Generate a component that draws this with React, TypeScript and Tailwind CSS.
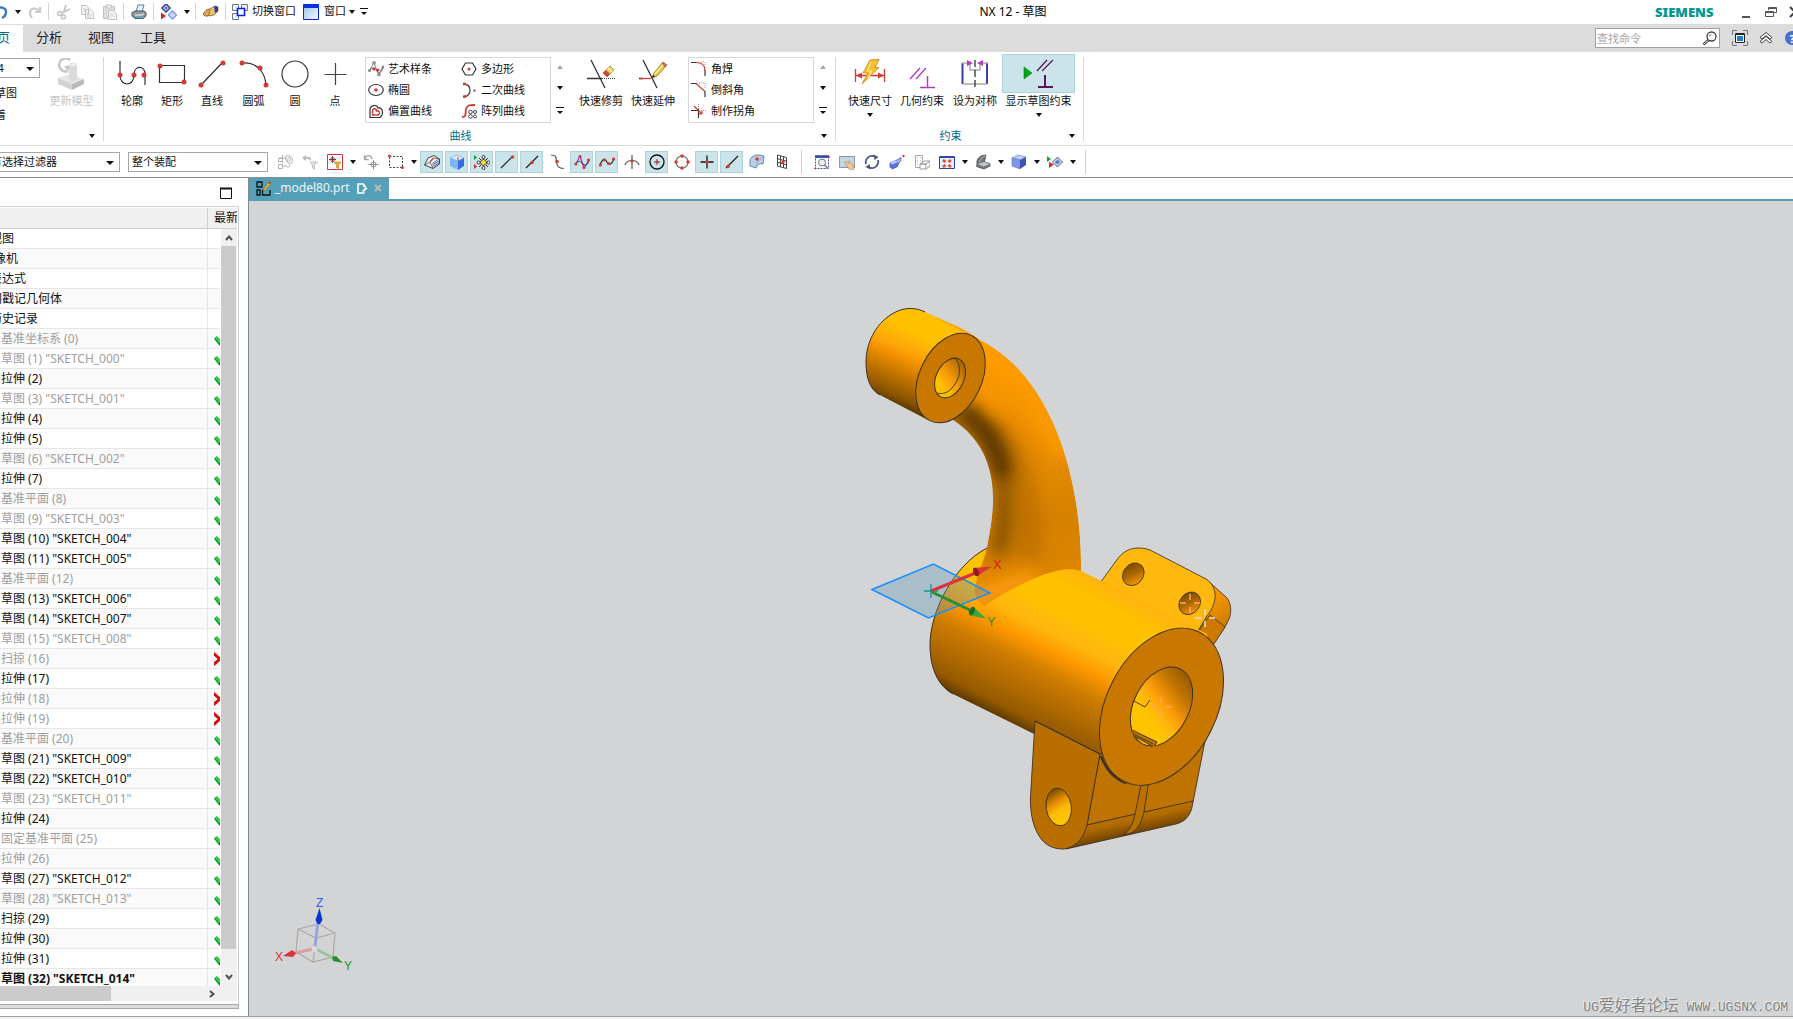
import type { ReactNode } from "react";
import clsx from "clsx";

type IconProps = { w?: number; h?: number; vb?: string; children: ReactNode };

function Icon({ w = 16, h = 16, vb, children }: IconProps) {
  return (
    <svg width={w} height={h} viewBox={vb ?? `0 0 ${w} ${h}`} fill="none" className="shrink-0" aria-hidden="true">
      {children}
    </svg>
  );
}

function Caret({ muted = false, up = false }: { muted?: boolean; up?: boolean }) {
  return (
    <Icon w={6} h={4}>
      <path d={up ? "M0 4h6L3 0z" : "M0 0h6L3 4z"} fill={muted ? "#a8a8a8" : "#111"} />
    </Icon>
  );
}

function MoreCaret() {
  return (
    <Icon w={8} h={8}>
      <path d="M0 .5h8" stroke="#111" />
      <path d="M1 4h6L4 7z" fill="#111" />
    </Icon>
  );
}

function Dot({ x, y, r = 2.5 }: { x: number; y: number; r?: number }) {
  return <circle cx={x} cy={y} r={r} fill="#d23c35" />;
}

/* ---------- Title bar ---------- */

function QuickDivider() {
  return <span className="h-[17px] w-px shrink-0 bg-[#d4d4d4]" />;
}

function QuickButton({ label, children }: { label: string; children: ReactNode }) {
  return (
    <button type="button" aria-label={label} className="flex h-5 w-[23px] shrink-0 items-center justify-center">
      {children}
    </button>
  );
}

function TitleBar() {
  return (
    <header className="flex h-6 items-center bg-white pb-px">
      <div className="-ml-[11px] flex w-[382px] shrink-0 items-center text-[11px]">
        <QuickButton label="撤销">
          <Icon>
            <path d="M2 2v5h5M3 6c3-4 10-3 10 2 0 3-2 5-4 6" stroke="#3a78c0" strokeWidth="2.4" />
          </Icon>
        </QuickButton>
        <span className="flex w-[11px] justify-center">
          <Caret />
        </span>
        <QuickButton label="重做">
          <Icon>
            <path d="M13 3v5H8M12 7C9 3 3 4 3 9c0 2 1 4 2 5" stroke="#c9c9c9" strokeWidth="2.2" />
          </Icon>
        </QuickButton>
        <span className="w-[2px]" />
        <QuickDivider />
        <span className="w-[3px]" />
        <QuickButton label="剪切">
          <Icon>
            <path d="M10 1 7.500 9M14 5 6 9" stroke="#c4c4c4" strokeWidth="1.8" />
            <circle cx="3.500" cy="9.500" r="2" stroke="#c4c4c4" strokeWidth="1.500" />
            <circle cx="7.500" cy="13" r="2" stroke="#c4c4c4" strokeWidth="1.500" />
          </Icon>
        </QuickButton>
        <QuickButton label="复制">
          <Icon>
            <path d="M2.500 1.500h5l2 2v7h-7zM6.500 5.500h5l3 3v6h-8z" fill="#f4f4f4" stroke="#c4c4c4" />
            <path d="M8 9h3M8 11h5M8 13h4M4 5h2M4 7h2" stroke="#cfcfcf" />
          </Icon>
        </QuickButton>
        <QuickButton label="粘贴">
          <Icon>
            <path d="M1.500 2.500h11v12h-11z" fill="#dedede" stroke="#c4c4c4" />
            <path d="M4.500 1h5v3h-5z" fill="#eee" stroke="#c4c4c4" />
            <path d="M6.500 6.500h5l3 3v6h-8z" fill="#f4f4f4" stroke="#c4c4c4" />
            <path d="M8 10h3M8 12h5" stroke="#cfcfcf" />
          </Icon>
        </QuickButton>
        <span className="w-[2px]" />
        <QuickDivider />
        <span className="w-[3px]" />
        <QuickButton label="打印">
          <Icon>
            <path d="m5 8 2-7h6l-2 7z" fill="#e6f2fa" stroke="#6c7d88" />
            <path d="M1 8.500 4 7h9l2 1.500V12l-3 2.500H4L1 12z" fill="#8e979c" stroke="#4e585e" />
            <path d="M4 11h7l2-1.500" stroke="#fff" />
            <path d="m5 13 6 .500" stroke="#55b0d0" strokeWidth="1.500" />
          </Icon>
        </QuickButton>
        <span className="w-[3px]" />
        <QuickDivider />
        <span className="w-[3px]" />
        <QuickButton label="命令查找">
          <Icon>
            <path d="m5 0 4 4-4 4-4-4z" fill="#fff" stroke="#2b3a8c" strokeWidth="1.500" />
            <path d="m5 2 2 2-2 2-2-2z" fill="#5a6ab8" />
            <path d="m11.500 7 4 4-4 4-4-4z" fill="#cfdcff" stroke="#7f9df0" strokeWidth="1.500" />
            <path d="M0 8.500v7l5-3.500z" fill="#d82020" />
          </Icon>
        </QuickButton>
        <span className="flex w-[14px] justify-center">
          <Caret />
        </span>
        <span className="w-px" />
        <QuickDivider />
        <span className="w-[3px]" />
        <QuickButton label="触控模式">
          <Icon w={17} h={14}>
            <path d="M1 9c2-3 4-5 7-5l2 2-4 5H3z" fill="#d9a860" stroke="#8c6226" />
            <path d="m8 4 5-3 3 1v4l-4 4-5 1z" fill="#e8c46a" stroke="#a27a2e" />
            <path d="m12 1 4 1v4l-3 2z" fill="#2d38b0" />
          </Icon>
        </QuickButton>
        <span className="w-[3px]" />
        <QuickDivider />
        <button type="button" className="flex shrink-0 items-center gap-1 pl-[6px] whitespace-nowrap">
          <Icon>
            <path d="M.500.500h6v6h-6zM9.500.500h6v6h-6zM.500 9.500h6v6h-6z" fill="#eef2f4" stroke="#6a7880" />
            <path d="M5.500 4.500h7v7h-7z" fill="#fff" stroke="#0a20f0" strokeWidth="1.600" />
          </Icon>
          切换窗口
        </button>
        <button type="button" className="flex shrink-0 items-center gap-[5px] pl-[7px] whitespace-nowrap">
          <Icon>
            <defs>
              <linearGradient id="win" x1="0" y1="0" x2="1" y2="1">
                <stop offset="0" stopColor="#8fc0ea" />
                <stop offset="1" stopColor="#fff" />
              </linearGradient>
            </defs>
            <path d="M.500.500h15v15h-15z" fill="url(#win)" stroke="#0a20f0" />
            <path d="M1 1h14v3H1z" fill="#1030d8" />
          </Icon>
          窗口
        </button>
        <span className="flex items-center gap-[5px] pl-[3px]">
          <Caret />
          <MoreCaret />
        </span>
      </div>
      <h1 className="flex-1 text-center text-[12px] leading-4 whitespace-nowrap text-black">NX 12 - 草图</h1>
      <div className="flex w-[138px] shrink-0 items-center overflow-hidden">
        <span className="w-[87px] shrink-0 font-['Noto_Sans','Open_Sans',sans-serif] text-[13px] leading-6 font-black text-[#009793]">
          SIEMENS
        </span>
        <button type="button" aria-label="最小化" className="flex w-[23px] shrink-0 items-center">
          <Icon w={8} h={12}>
            <path d="M0 11h8" stroke="#555" strokeWidth="2" />
          </Icon>
        </button>
        <button type="button" aria-label="还原" className="flex w-6 shrink-0 items-center">
          <Icon w={12} h={12}>
            <path d="M3.500 4V1.500h8v5H9M3.500 2.500h8M.500 5.500h8v5h-8zM.500 6.500h8" stroke="#555" />
          </Icon>
        </button>
        <button type="button" aria-label="关闭" className="shrink-0">
          <Icon w={12} h={12}>
            <path d="m1 1 10 10M11 1 1 11" stroke="#444" strokeWidth="2" />
          </Icon>
        </button>
      </div>
    </header>
  );
}

/* ---------- Ribbon tabs ---------- */

function TabBar() {
  return (
    <nav className="flex h-7 items-stretch overflow-hidden bg-[#dcdcdc] text-[13px] text-[#222]">
      <button type="button" className="-ml-[29px] mt-px bg-white px-[13px] pb-px text-[#006a8e]">
        主页
      </button>
      {["分析", "视图", "工具"].map((t) => (
        <button key={t} type="button" className="px-[13px]">
          {t}
        </button>
      ))}
      <div className="ml-auto flex w-[198px] shrink-0 items-center">
        <label className="flex h-5 w-[125px] shrink-0 items-center border border-[#a0a0a0] bg-white">
          <input
            type="text"
            aria-label="查找命令"
            placeholder="查找命令"
            className="h-[18px] w-[106px] bg-transparent pl-px text-[11px] outline-none placeholder:text-[#a6a6a6]"
          />
          <Icon w={15} h={15}>
            <circle cx="9.500" cy="5.500" r="4.500" stroke="#444" strokeWidth="1.300" />
            <path d="M7.500 5.500a2 2 0 0 1 2-2" stroke="#888" />
            <path d="m6.500 9-5 4.500" stroke="#444" strokeWidth="2.500" />
            <path d="m6 9.500-4 3.500" stroke="#fff" strokeWidth=".8" />
          </Icon>
        </label>
        <button type="button" aria-label="全屏" className="ml-3 shrink-0">
          <Icon>
            <path d="M.500 5V.500H5M11 .500h4.500V5M15.500 11v4.500H11M5 15.500H.500V11" stroke="#777" />
            <path d="M3.500 3.500h9v9h-9z" fill="#fff" stroke="#222" />
            <path d="M5 6h6v5H5z" fill="#1c7fd6" />
            <path d="M4 4.500h8" stroke="#222" />
          </Icon>
        </button>
        <button type="button" aria-label="最小化功能区" className="ml-[11px] shrink-0">
          <Icon w={14} h={12}>
            <path d="m1 5.500 6-5 6 5-2 1.500-4-3.500L3 7zM1 9.500l6-5 6 5-2 1.500-4-3.500L3 11z" fill="#fff" stroke="#333" strokeWidth=".9" />
          </Icon>
        </button>
        <button type="button" aria-label="帮助" className="ml-3 flex size-[14px] shrink-0 items-center justify-center rounded-full bg-[#4a6fd0] text-[11px] leading-none font-bold text-white">
          ?
        </button>
      </div>
    </nav>
  );
}

/* ---------- Ribbon ---------- */

type ToolProps = { label: string; width: string; icon: ReactNode; menu?: boolean; active?: boolean; disabled?: boolean };

function Tool({ label, width, icon, menu, active, disabled }: ToolProps) {
  return (
    <button type="button" disabled={disabled} className={clsx("flex shrink-0 flex-col items-center", width)}>
      <span
        className={clsx(
          "flex h-[39px] w-full items-center justify-center",
          active && "border border-[#aed3dc] bg-[#cbe4e9]",
        )}
      >
        {icon}
      </span>
      <span className={clsx("text-[11px] leading-4 whitespace-nowrap", disabled ? "text-[#c6c6c6]" : "text-[#111]")}>
        {label}
      </span>
      {menu && (
        <span className="flex h-3 items-center">
          <Caret />
        </span>
      )}
    </button>
  );
}

function RibbonGroup({ title, className, children }: { title?: string; className?: string; children: ReactNode }) {
  return (
    <section className="relative flex shrink-0 flex-col pr-px">
      <div className={clsx("flex h-[74px] items-start", className)}>{children}</div>
      <div className="flex h-4 items-center">
        <span className="flex-1 pl-1 text-center text-[11px] leading-4 text-[#006a8e]">{title}</span>
        <span className="flex w-[22px] justify-center">
          <Caret />
        </span>
      </div>
      <span className="absolute top-[3px] right-0 h-[84px] w-px bg-[#d8d8d8]" />
    </section>
  );
}

function GalleryScroll() {
  return (
    <div className="mt-[3px] flex h-[66px] w-[17px] shrink-0 flex-col items-center justify-around">
      <Caret up muted />
      <Caret />
      <MoreCaret />
    </div>
  );
}

function GalleryItem({ label, icon }: { label: string; icon: ReactNode }) {
  return (
    <button type="button" className="flex min-h-0 items-center gap-1 text-[11px] leading-4 whitespace-nowrap text-[#111]">
      <span className="flex w-4 justify-center">{icon}</span>
      {label}
    </button>
  );
}

const drawTools: (ToolProps & { label: string })[] = [
  {
    label: "轮廓",
    width: "w-[40px]",
    icon: (
      <Icon w={30} h={28}>
        <path d="M3 1v14c0 12 14 12 14 0 0-10 11-10 11-1v11" stroke="#333" strokeWidth="1.200" />
        <Dot x={3} y={15} />
        <Dot x={17} y={15} />
        <Dot x={27} y={15} />
      </Icon>
    ),
  },
  {
    label: "矩形",
    width: "w-[40px]",
    icon: (
      <Icon w={30} h={24}>
        <path d="M2.500 3.500h25v17h-25z" stroke="#333" strokeWidth="1.200" />
        <Dot x={3} y={4} />
        <Dot x={27} y={20} />
      </Icon>
    ),
  },
  {
    label: "直线",
    width: "w-[40px]",
    icon: (
      <Icon w={28} h={28}>
        <path d="M3 25 24 3" stroke="#333" strokeWidth="1.300" />
        <Dot x={3} y={25} />
        <Dot x={25} y={3} />
      </Icon>
    ),
  },
  {
    label: "圆弧",
    width: "w-[43px]",
    icon: (
      <Icon w={30} h={28}>
        <path d="M3 3c14-1 23 8 24 22" stroke="#333" strokeWidth="1.200" />
        <Dot x={3} y={3} />
        <Dot x={21} y={8} />
        <Dot x={27} y={25} />
      </Icon>
    ),
  },
  {
    label: "圆",
    width: "w-[40px]",
    icon: (
      <Icon w={28} h={28}>
        <circle cx="14" cy="14" r="13" stroke="#333" strokeWidth="1.200" />
      </Icon>
    ),
  },
  {
    label: "点",
    width: "w-[40px]",
    icon: (
      <Icon w={23} h={24}>
        <path d="M11.500 1v22M.500 12.500h22" stroke="#444" strokeWidth="1.200" />
      </Icon>
    ),
  },
];

const curveGallery = [
  {
    label: "艺术样条",
    icon: (
      <Icon>
        <path d="M1 10 6 2l3 8 2 3 4-7" stroke="#888" />
        <path d="M1 10c3-4 6-4 8 0s4 1 6-3" stroke="#555" />
        <circle cx="6" cy="2" r="2" fill="#999" />
        <circle cx="11" cy="13.500" r="2" fill="#999" />
        <Dot x={6} y={8} r={1.600} />
        <Dot x={10} y={9} r={1.600} />
        <circle cx="1.500" cy="9.500" r="1.500" fill="#888" />
        <circle cx="15" cy="6" r="1.500" fill="#888" />
      </Icon>
    ),
  },
  {
    label: "多边形",
    icon: (
      <Icon>
        <path d="M4.500 2h7l3.500 6-3.500 6h-7L1 8z" stroke="#333" strokeWidth="1.200" />
        <Dot x={8} y={8} r={1.600} />
      </Icon>
    ),
  },
  {
    label: "椭圆",
    icon: (
      <Icon>
        <ellipse cx="8" cy="8" rx="7.300" ry="5.500" stroke="#333" strokeWidth="1.200" />
        <Dot x={8} y={8} r={1.800} />
      </Icon>
    ),
  },
  {
    label: "二次曲线",
    icon: (
      <Icon>
        <path d="M3 2c8 1 8 11 0 13" stroke="#444" strokeWidth="1.300" />
        <path d="M2 2h3M2 15l3-1" stroke="#d23c35" strokeWidth="2.500" />
        <circle cx="13.500" cy="8.500" r="1.600" fill="#999" />
      </Icon>
    ),
  },
  {
    label: "偏置曲线",
    icon: (
      <Icon>
        <path d="M2 14.500V7c0-5 7-6 8-2 5-1 6 6 2 9.500z" stroke="#333" strokeWidth="1.200" />
        <path d="M4.500 12V8c0-3 4-3 4 0 3-1 4 2 2 4z" stroke="#d23c35" strokeWidth="1.400" />
      </Icon>
    ),
  },
  {
    label: "阵列曲线",
    icon: (
      <Icon>
        <path d="M1 14c5 0 3-4 4-8s3-4 9-4" stroke="#d23c35" strokeWidth="1.800" />
        <circle cx="9.500" cy="9" r="1.800" stroke="#444" />
        <circle cx="14" cy="9" r="1.500" stroke="#444" />
        <circle cx="9.500" cy="13.500" r="1.800" stroke="#444" />
        <circle cx="14" cy="13.500" r="1.500" stroke="#444" />
      </Icon>
    ),
  },
];

const cornerGallery = [
  {
    label: "角焊",
    icon: (
      <Icon>
        <path d="M10 1h4v4" stroke="#999" strokeDasharray="1 1" />
        <path d="M0 1.500h6M14 9v6" stroke="#333" strokeWidth="1.200" />
        <path d="M5 1.500c6 0 9 3 9 8" stroke="#d23c35" strokeWidth="1.200" />
      </Icon>
    ),
  },
  {
    label: "倒斜角",
    icon: (
      <Icon>
        <path d="M8 1h6v6" stroke="#999" strokeDasharray="1 1" />
        <path d="M0 1.500h6M14 9v6" stroke="#333" strokeWidth="1.200" />
        <path d="m5 1.500 9 8" stroke="#d23c35" strokeWidth="1.200" />
      </Icon>
    ),
  },
  {
    label: "制作拐角",
    icon: (
      <Icon>
        <path d="M7.500 1v5M10 7.500h5" stroke="#999" strokeDasharray="1 1" />
        <path d="M0 7.500h8M7.500 6v9" stroke="#333" strokeWidth="1.200" />
        <path d="m3 3 8 8M11 11H8M11 11V8" stroke="#d23c35" strokeWidth="1.200" />
      </Icon>
    ),
  },
];

const trimIcon = (
  <Icon w={30} h={30}>
    <path d="M5 1 19 29M1 19.500h15" stroke="#333" strokeWidth="1.300" />
    <path d="M16 19.500h14" stroke="#333" strokeDasharray="1 1" />
    <path d="m17 14 7-7 4 4-7 7z" fill="#f5d24a" stroke="#a8812a" strokeWidth=".8" />
    <path d="m17 14 3-3 4 4-3 3z" fill="#c8473e" />
    <path d="m22 9 4 4" stroke="#fff6c0" strokeWidth="1.500" />
  </Icon>
);

const extendIcon = (
  <Icon w={30} h={30}>
    <path d="M5 1 19 29M1 19.500h4" stroke="#333" strokeWidth="1.300" />
    <path d="M2 19.500h11" stroke="#d23c35" strokeWidth="1.300" />
    <path d="m14 19 2-5L25 3l4 3-10 11z" fill="#f2cc3c" stroke="#8a6a1a" strokeWidth=".8" />
    <path d="m25 3 4 3-2 2.500-4-3.200z" fill="#c8675e" />
    <path d="m14 19 1-3 2 1.500z" fill="#222" />
    <path d="M17 15 25 5.500" stroke="#fff4b0" strokeWidth="1.200" />
  </Icon>
);

const dimensionIcon = (
  <Icon w={32} h={30}>
    <path d="M1.500 10v13M30.500 10v13M2 16.500h28" stroke="#d23c35" strokeWidth="1.300" />
    <path d="m2 16.500 6-3v6zM30 16.500l-6-3v6z" fill="#d23c35" />
    <path d="m16 1 9-.500-4 8h4L8 25l6-11h-5z" fill="#f8c030" stroke="#d8861c" strokeWidth=".9" />
    <path d="m17 3-4 9h5l-4 7" stroke="#fff0a0" />
  </Icon>
);

const geometricIcon = (
  <Icon w={28} h={30}>
    <path d="M2 20 12 9M8 20 18 9" stroke="#b33cc0" strokeWidth="1.300" />
    <path d="M19.500 17v11M12 28.500h15" stroke="#b33cc0" strokeWidth="1.500" />
  </Icon>
);

const symmetricIcon = (
  <Icon w={28} h={30}>
    <path d="M1.500 4v21M26 4v21" stroke="#3a3fa0" strokeWidth="2" />
    <path d="M2 25h24M1 4h6M21 4h6M9 5v6h10V5" stroke="#aaa" strokeWidth="1.500" />
    <path d="m6 1 6 3-6 3zM22 1l-6 3 6 3z" fill="#b33cc0" />
    <path d="M14 1v29" stroke="#222" strokeWidth="1.200" strokeDasharray="7 3" />
  </Icon>
);

const showIcon = (
  <Icon w={32} h={32}>
    <path d="M1 9v12l8-6z" fill="#00a818" stroke="#0a7a1c" strokeWidth=".6" />
    <path d="m14 13 10-11M19 13 30 2" stroke="#5c1460" strokeWidth="1.300" />
    <path d="M22 17v11M15 29h15" stroke="#5c1460" strokeWidth="2" />
  </Icon>
);

function Select({ label, value, className }: { label: string; value: string; className: string }) {
  return (
    <label className={clsx("relative block h-5 shrink-0 bg-white", className)}>
      <select
        aria-label={label}
        className="block h-5 w-full appearance-none rounded-none border border-[#a6a6a6] bg-transparent pl-[3px] text-[11px] leading-[18px] text-[#111] outline-none"
      >
        <option>{value}</option>
      </select>
      <span className="pointer-events-none absolute top-[9px] right-[6px]">
        <Icon w={8} h={4}>
          <path d="M0 0h8L4 4z" fill="#111" />
        </Icon>
      </span>
    </label>
  );
}

function Ribbon() {
  return (
    <div className="flex h-[94px] overflow-hidden border-b border-[#d8d8d8] bg-white pt-[2px]">
      <RibbonGroup className="-ml-16 w-[167px]">
        <div className="mt-1 w-[104px] shrink-0">
          <Select label="草图名" value="SKETCH_014" className="w-[104px]" />
          <div className="mt-1 flex flex-col items-start pl-[26px] text-[11px] leading-[22px] text-[#111]">
            <button type="button">定向到草图</button>
            <button type="button">重新附着</button>
          </div>
        </div>
        <Tool
          label="更新模型"
          width="w-[63px]"
          disabled
          icon={
            <Icon w={32} h={32}>
              <path d="M14 2a6.500 6.500 0 1 0-2 11" stroke="#c4c4c4" strokeWidth="2.500" />
              <path d="M8 8.500 15 7l-3 6z" fill="#c4c4c4" />
              <path d="M2 20 15 16l13 5-12 5z" fill="#e6e6e6" />
              <path d="m2 20 14 6v6L2 26z" fill="#d2d2d2" />
              <path d="m28 21-12 5v6l12-6z" fill="#bababa" />
              <path d="M13 7h8v14c-2 2-6 2-8 0z" fill="#dadada" />
              <ellipse cx="17" cy="7" rx="4" ry="1.800" fill="#efefef" stroke="#cfcfcf" strokeWidth=".5" />
            </Icon>
          }
        />
      </RibbonGroup>

      <RibbonGroup title="曲线" className="pr-1 pl-2">
        {drawTools.map((t) => (
          <Tool key={t.label} {...t} />
        ))}
        <div className="mt-[3px] ml-[10px] grid h-[66px] w-[186px] shrink-0 grid-cols-[93px_1fr] grid-rows-3 border border-[#d8d8d8] pl-[2px]">
          {curveGallery.map((g) => (
            <GalleryItem key={g.label} {...g} />
          ))}
        </div>
        <GalleryScroll />
        <div className="mr-[9px] ml-[7px] flex">
          <Tool label="快速修剪" width="w-[52px]" icon={trimIcon} />
          <Tool label="快速延伸" width="w-[52px]" icon={extendIcon} />
        </div>
        <div className="mt-[3px] grid h-[66px] w-[126px] shrink-0 grid-rows-3 border border-[#d8d8d8] pl-[2px]">
          {cornerGallery.map((g) => (
            <GalleryItem key={g.label} {...g} />
          ))}
        </div>
        <GalleryScroll />
      </RibbonGroup>

      <RibbonGroup title="约束" className="px-2">
        <Tool label="快速尺寸" width="w-[52px]" icon={dimensionIcon} menu />
        <Tool label="几何约束" width="w-[52px]" icon={geometricIcon} />
        <Tool label="设为对称" width="w-[54px]" icon={symmetricIcon} />
        <Tool label="显示草图约束" width="w-[73px]" icon={showIcon} menu active />
      </RibbonGroup>
    </div>
  );
}

/* ---------- Selection bar ---------- */

type BarItem = { label: string; on?: boolean; icon: ReactNode } | "caret" | "divider";

const barItems: BarItem[] = [
  {
    label: "装配导航",
    icon: (
      <Icon>
        <path d="M1.500 4.500h4v3h-4zM1.500 10.500h4v4h-4zM6 12h3M5.500 1v8M2 4h8" stroke="#b0b0b0" />
        <ellipse cx="11" cy="4.500" rx="2.500" ry="3.500" stroke="#b8b8b8" />
        <ellipse cx="13" cy="6.500" rx="2.500" ry="3.500" stroke="#b8b8b8" />
        <path d="M9 11c0 3 4 3 4 0" stroke="#b8b8b8" />
      </Icon>
    ),
  },
  {
    label: "重置过滤器",
    icon: (
      <Icon>
        <path d="M0 4l4-3v2c5-1 6 2 4 4 0-2-2-2-4-2v2z" fill="#bbb" />
        <path d="M8 8h7.500l-3 3v4.500l-2-1.500V11z" fill="#e4e4e4" stroke="#c0c0c0" />
      </Icon>
    ),
  },
  {
    label: "选择优先级",
    icon: (
      <Icon>
        <path d="M.500.500h15v15H.500z" fill="#fff" stroke="#d8343e" />
        <path d="M5.500 2v7M2 5.500h7" stroke="#444" />
        <circle cx="5.500" cy="5.500" r="2" stroke="#c04040" />
        <path d="M7 8h7l-2.500 3v3.500l-2-1V11z" fill="#f0b030" stroke="#b07a10" strokeWidth=".6" />
      </Icon>
    ),
  },
  "caret",
  {
    label: "移动点",
    icon: (
      <Icon>
        <path d="M2 5c1-4 6-5 7 0M1.500 1v4.500h4" stroke="#a8a8a8" strokeWidth="1.400" />
        <path d="M10.500 6v9.500M5.500 10.500h10" stroke="#909090" />
        <circle cx="10.500" cy="10.500" r="2.500" stroke="#909090" />
      </Icon>
    ),
  },
  {
    label: "矩形选择",
    icon: (
      <Icon>
        <path d="M1.500 2.500h13v11h-13z" stroke="#444" strokeDasharray="2 1.500" />
        <Dot x={1.500} y={2} r={1.500} />
        <Dot x={14.500} y={13.500} r={1.500} />
      </Icon>
    ),
  },
  "caret",
  {
    label: "高亮显示",
    on: true,
    icon: (
      <Icon>
        <path d="M.500 11 4 4l6-2.500L15.500 5v5L9 14.500z" fill="#eef1f5" stroke="#444" />
        <path d="M.500 11 6 8l3.500-4 6 1M6 8l3 6.500M9 14.500V9l6-4" stroke="#666" strokeWidth=".9" />
        <path d="M6.500 7.500 9.500 4" stroke="#d23c35" strokeWidth="1.200" />
        <path d="m10 10 5-3M10 12l5-3" stroke="#3d57c8" />
      </Icon>
    ),
  },
  {
    label: "实体",
    on: true,
    icon: (
      <Icon>
        <path d="m1 4 7-3 7 3-6 3z" fill="#dceaff" stroke="#7e9fd8" strokeWidth=".6" />
        <path d="m1 4 8 3v9l-8-4z" fill="#7fb4f8" />
        <path d="m15 4-6 3v9l6-4z" fill="#2f6fe0" />
        <path d="M9 7V3" stroke="#d23c35" />
      </Icon>
    ),
  },
  {
    label: "启用捕捉点",
    on: true,
    icon: (
      <Icon>
        <path d="M0 1v5l3-2.500z" fill="#13a020" />
        <path d="M0 10v5l3-2.500z" fill="#d82020" />
        <path d="M9.500 2v13M3.500 8.500h12M5 4l9 9M14 4l-9 9" stroke="#333" />
        <circle cx="9.500" cy="8.500" r="3" fill="#f6d428" stroke="#555" />
        <circle cx="9.500" cy="3" r="1.500" fill="#fff" stroke="#333" />
        <circle cx="9.500" cy="14" r="1.500" fill="#fff" stroke="#333" />
        <circle cx="4.500" cy="8.500" r="1.500" fill="#fff" stroke="#333" />
        <circle cx="14.500" cy="8.500" r="1.500" fill="#fff" stroke="#333" />
      </Icon>
    ),
  },
  {
    label: "端点",
    on: true,
    icon: (
      <Icon>
        <path d="M2 14 13 3" stroke="#222" strokeWidth="1.200" />
        <Dot x={13.500} y={3} r={1.800} />
      </Icon>
    ),
  },
  {
    label: "中点",
    on: true,
    icon: (
      <Icon>
        <path d="M2 14 14 2" stroke="#222" strokeWidth="1.200" />
        <Dot x={8} y={8.500} r={1.800} />
      </Icon>
    ),
  },
  {
    label: "控制点",
    icon: (
      <Icon>
        <path d="M2 1c6 0 5 3 5.500 7S9 14 15 14.500" stroke="#555" strokeWidth="1.200" />
        <Dot x={8} y={7.500} r={1.800} />
      </Icon>
    ),
  },
  {
    label: "极点",
    on: true,
    icon: (
      <Icon>
        <path d="M2 10 6 2l4 12 5-8" stroke="#a030d0" strokeWidth="1.200" />
        <path d="M1 10c4-4 5-3 8 0s5 0 6-4" stroke="#333" />
        <Dot x={1.800} y={10} r={1.600} />
        <Dot x={6} y={2.500} r={1.600} />
        <Dot x={10} y={13.500} r={1.600} />
        <Dot x={14.500} y={6} r={1.600} />
      </Icon>
    ),
  },
  {
    label: "定义点",
    on: true,
    icon: (
      <Icon>
        <path d="M1 11c3-7 5-7 7-3s5 2 7-3" stroke="#333" strokeWidth="1.200" />
        <Dot x={1.500} y={11} r={1.600} />
        <Dot x={5.500} y={6} r={1.600} />
        <Dot x={9.500} y={9.500} r={1.600} />
        <Dot x={14.500} y={5} r={1.600} />
      </Icon>
    ),
  },
  {
    label: "交点",
    icon: (
      <Icon>
        <path d="M8 1v14M1 11c2-6 12-6 14 0" stroke="#555" strokeWidth="1.200" />
        <Dot x={8} y={6.800} r={1.600} />
      </Icon>
    ),
  },
  {
    label: "圆弧中心",
    on: true,
    icon: (
      <Icon>
        <circle cx="8" cy="8" r="7" stroke="#111" strokeWidth="1.300" />
        <path d="M5 8h6M8 5v6" stroke="#555" />
        <Dot x={8} y={8} r={1.600} />
      </Icon>
    ),
  },
  {
    label: "象限点",
    icon: (
      <Icon>
        <circle cx="8" cy="8" r="6" stroke="#777" strokeWidth="1.200" />
        <Dot x={8} y={2} r={1.800} />
        <Dot x={8} y={14} r={1.800} />
        <Dot x={2} y={8} r={1.800} />
        <Dot x={14} y={8} r={1.800} />
      </Icon>
    ),
  },
  {
    label: "现有点",
    on: true,
    icon: (
      <Icon>
        <path d="M8 1.500v13M1.500 8h13" stroke="#111" strokeWidth="1.300" />
        <Dot x={8} y={8} r={1.800} />
      </Icon>
    ),
  },
  {
    label: "点在曲线上",
    on: true,
    icon: (
      <Icon>
        <path d="M2 14 14 2" stroke="#222" strokeWidth="1.200" />
        <Dot x={4} y={12.500} r={1.800} />
      </Icon>
    ),
  },
  {
    label: "点在面上",
    icon: (
      <Icon>
        <path d="M1 6C3 1 8 0 15 2l-1 8c-3-1-5 0-7 4L1 12z" fill="#b9cfe6" stroke="#6c87a8" />
        <path d="m7 14 2-7 6-5" stroke="#8ea6c2" />
        <Dot x={8} y={5} r={1.800} />
      </Icon>
    ),
  },
  {
    label: "有界栅格上的点",
    icon: (
      <Icon>
        <path d="m3.500 1 9 2.500v11L3.500 12zM3.500 4.700l9 2.500M3.500 8.300l9 2.500M6.500 2v11M9.500 2.800v11" stroke="#444" />
        <Dot x={9} y={8} r={1.700} />
      </Icon>
    ),
  },
  "divider",
  {
    label: "适合窗口",
    icon: (
      <Icon>
        <path d="M1.500 3.500h13v11h-13z" stroke="#3d57c8" strokeDasharray="2 1" />
        <path d="M1 2.500h14" stroke="#2f44b0" strokeWidth="2.500" />
        <circle cx="8" cy="8.500" r="3.500" fill="#e8eef4" stroke="#777" />
        <path d="m10.500 11 3 3" stroke="#777" strokeWidth="1.500" />
        <Dot x={15} y={3} r={1} />
        <Dot x={1} y={14.500} r={1} />
      </Icon>
    ),
  },
  {
    label: "平移",
    icon: (
      <Icon>
        <path d="M.500 2.500h15v11H.500z" fill="#c6d4e6" stroke="#8b97a6" />
        <path d="m5.500 8 2-.500 2 2V7.500l1.500-.500 1 3 2 .500 1 5-4 1z" fill="#f0c898" stroke="#b08850" strokeWidth=".6" />
      </Icon>
    ),
  },
  {
    label: "旋转",
    icon: (
      <Icon>
        <path d="M2 10a6.300 6.300 0 0 1 9-7.300M14 6a6.300 6.300 0 0 1-9 7.300" stroke="#4a5680" strokeWidth="1.800" />
        <path d="m9.500.500 5 2.500-4 3zM6.500 15.500l-5-2.500 4-3z" fill="#4a5680" />
      </Icon>
    ),
  },
  {
    label: "定向视图",
    icon: (
      <Icon>
        <path d="m1 9 6-2.500 2.500 3-1 3L3.500 15 1 13z" fill="#5a70dc" stroke="#3a4cb0" strokeWidth=".7" />
        <path d="m7 6.500 5-3v3l-2.500 3z" fill="#a9b6f4" stroke="#3a4cb0" strokeWidth=".7" />
        <path d="m1 9 6-2.500 2 1.500-6 2.500z" fill="#c2ccf8" />
        <Dot x={14.500} y={2} r={1.200} />
      </Icon>
    ),
  },
  {
    label: "新建截面",
    icon: (
      <Icon>
        <path d="M1.500 1.500h7v12h-7zM3 4h1M6 4h1M3 7h1M6 7h1M3 10h1" stroke="#a8a8a8" />
        <path d="m6 10 4-3h6l-4 3zM6 10h6v5H6zM16 7v5l-4 3" fill="#fff" stroke="#999" />
      </Icon>
    ),
  },
  {
    label: "显示布局",
    icon: (
      <Icon>
        <path d="M.500 2.500h15v12H.500z" fill="#e8eefc" stroke="#2f44b0" />
        <path d="M1 3h14" stroke="#2f44b0" strokeWidth="2" />
        <path d="m4 6 2.500 2M12 6l-2.500 2M4 13l2.500-2M12 13l-2.500-2" stroke="#e04a28" strokeWidth="2.500" />
      </Icon>
    ),
  },
  "caret",
  {
    label: "显示样式",
    icon: (
      <Icon>
        <path d="M2 10c-1-5 3-9 9-9L9.500 8l5.500 1.500V12l-6 3-7.500-2.500z" fill="#74787b" stroke="#4c5054" strokeWidth=".8" />
        <path d="M9.500 8 3 10l5.500 2.500L15 10" fill="#c4c7c9" />
        <path d="M10.500 2C7 3 5.500 5 4.500 8.500" stroke="#b0b3b5" />
      </Icon>
    ),
  },
  "caret",
  {
    label: "着色",
    icon: (
      <Icon>
        <path d="m1 4 6-3 8 2-6 3z" fill="#c2cff8" stroke="#5d74cc" strokeWidth=".6" />
        <path d="m1 4 8 2v9l-8-3z" fill="#8096e8" stroke="#5d74cc" strokeWidth=".6" />
        <path d="m15 3-6 3v9l6-4z" fill="#4156b4" />
      </Icon>
    ),
  },
  "caret",
  {
    label: "显示和隐藏",
    icon: (
      <Icon>
        <path d="M0 2v6l4-3z" fill="#18a428" />
        <path d="M2 8v6l5-3.500z" fill="#d23030" />
        <path d="m10.500 3 5 5-5 5-5-5z" fill="#c9d2e8" stroke="#5c6684" />
        <path d="m10.500 5.500 2.500 2.500-2.500 2.500L8 8z" fill="#5f78c8" />
      </Icon>
    ),
  },
  "caret",
  "divider",
];

function SelectionBar() {
  return (
    <div className="flex h-8 items-center overflow-hidden border-b border-[#868c90] bg-white">
      <Select label="类型过滤器" value="没有选择过滤器" className="-ml-[24px] w-[144px]" />
      <Select label="选择范围" value="整个装配" className="ml-2 w-[140px]" />
      <div className="ml-[5px] flex items-center gap-[2px]">
        {barItems.map((it, i) => {
          if (it === "caret") {
            return (
              <span key={i} className="flex w-[9px] justify-center">
                <Caret />
              </span>
            );
          }
          if (it === "divider") return <span key={i} className="mx-[6px] h-6 w-px bg-[#d0d0d0]" />;
          return (
            <button
              key={i}
              type="button"
              aria-label={it.label}
              className={clsx(
                "flex h-[22px] w-[23px] shrink-0 items-center justify-center",
                it.on && "border border-[#aed3dc] bg-[#cbe4e9]",
              )}
            >
              {it.icon}
            </button>
          );
        })}
      </div>
    </div>
  );
}

/* ---------- Part navigator ---------- */

type TreeRow = { name: string; status?: "ok" | "bad"; dim?: boolean; bold?: boolean; check?: boolean };

const rows: TreeRow[] = [
  { name: "模型视图" },
  { name: "摄像机", check: true },
  { name: "用户表达式" },
  { name: "非时间戳记几何体" },
  { name: "模型历史记录" },
  { name: "基准坐标系 (0)", status: "ok", dim: true },
  { name: '草图 (1) "SKETCH_000"', status: "ok", dim: true },
  { name: "拉伸 (2)", status: "ok" },
  { name: '草图 (3) "SKETCH_001"', status: "ok", dim: true },
  { name: "拉伸 (4)", status: "ok" },
  { name: "拉伸 (5)", status: "ok" },
  { name: '草图 (6) "SKETCH_002"', status: "ok", dim: true },
  { name: "拉伸 (7)", status: "ok" },
  { name: "基准平面 (8)", status: "ok", dim: true },
  { name: '草图 (9) "SKETCH_003"', status: "ok", dim: true },
  { name: '草图 (10) "SKETCH_004"', status: "ok" },
  { name: '草图 (11) "SKETCH_005"', status: "ok" },
  { name: "基准平面 (12)", status: "ok", dim: true },
  { name: '草图 (13) "SKETCH_006"', status: "ok" },
  { name: '草图 (14) "SKETCH_007"', status: "ok" },
  { name: '草图 (15) "SKETCH_008"', status: "ok", dim: true },
  { name: "扫掠 (16)", status: "bad", dim: true },
  { name: "拉伸 (17)", status: "ok" },
  { name: "拉伸 (18)", status: "bad", dim: true },
  { name: "拉伸 (19)", status: "bad", dim: true },
  { name: "基准平面 (20)", status: "ok", dim: true },
  { name: '草图 (21) "SKETCH_009"', status: "ok" },
  { name: '草图 (22) "SKETCH_010"', status: "ok" },
  { name: '草图 (23) "SKETCH_011"', status: "ok", dim: true },
  { name: "拉伸 (24)", status: "ok" },
  { name: "固定基准平面 (25)", status: "ok", dim: true },
  { name: "拉伸 (26)", status: "ok", dim: true },
  { name: '草图 (27) "SKETCH_012"', status: "ok" },
  { name: '草图 (28) "SKETCH_013"', status: "ok", dim: true },
  { name: "扫掠 (29)", status: "ok" },
  { name: "拉伸 (30)", status: "ok" },
  { name: "拉伸 (31)", status: "ok" },
  { name: '草图 (32) "SKETCH_014"', status: "ok", bold: true },
];

function StatusMark({ status }: { status: "ok" | "bad" }) {
  return status === "ok" ? (
    <Icon w={14} h={14}>
      <path d="m1.500 5.500 4 5 6-8" stroke="#0a8a24" strokeWidth="4" />
      <path d="m1.500 5 3.500 4.500 6-8" stroke="#1fdc3c" strokeWidth="2.200" />
    </Icon>
  ) : (
    <Icon w={14} h={14}>
      <path d="m-1 1 7 6-7 6M13 1 6 7l7 6" stroke="#d40f0f" strokeWidth="3" />
    </Icon>
  );
}

function Navigator() {
  return (
    <aside className="flex w-[249px] shrink-0 flex-col border-r border-[#7f898f] bg-white">
      <div className="flex h-7 items-center justify-end pt-[2px] pr-4">
        <button type="button" aria-label="最大化">
          <Icon w={12} h={12}>
            <path d="M.500 1v10.500h11V1" stroke="#111" />
            <path d="M0 1.500h12" stroke="#111" strokeWidth="2" />
          </Icon>
        </button>
      </div>
      <div className="mr-[9px] flex min-h-0 flex-1 flex-col overflow-hidden border-t border-r border-[#d0d0d0] pt-px pr-px">
        <div className="relative min-h-0 flex-1 overflow-hidden">
          <table className="-ml-[34px] w-[271px] table-fixed border-separate border-spacing-0 text-[12px] leading-4">
            <thead>
              <tr>
                <th scope="col" aria-label="名称" className="h-[21px] w-[242px] border-r border-b border-[#cfcfcf] bg-[#f0f0f0] p-0" />
                <th scope="col" className="h-[21px] overflow-hidden border-b border-[#cfcfcf] bg-[#f0f0f0] p-0 pl-[6px] text-left font-normal whitespace-nowrap">
                  最新
                </th>
              </tr>
            </thead>
            <tbody>
              {rows.map((r) => (
                <tr key={r.name} className={clsx("odd:bg-white even:bg-[#fafafa]", r.dim ? "text-[#9e9e9e]" : "text-[#111]")}>
                  <td
                    className={clsx(
                      "h-5 border-r border-b border-[#e6e6e6] p-0 whitespace-nowrap",
                      r.status && "pl-[35px]",
                      r.check && "pl-4",
                      r.bold && "font-bold",
                    )}
                  >
                    {r.name}
                  </td>
                  <td className="h-5 overflow-hidden border-b border-[#e6e6e6] p-0 pl-[6px]">
                    {r.status && <StatusMark status={r.status} />}
                  </td>
                </tr>
              ))}
            </tbody>
          </table>
          <div className="absolute top-[21px] right-0 bottom-0 flex w-[17px] flex-col border-l border-white bg-[#f0f0f0]">
            <span className="flex h-[17px] items-center justify-center">
              <Icon w={8} h={6}>
                <path d="m1 5 3-3.500L7 5" stroke="#505050" strokeWidth="2" />
              </Icon>
            </span>
            <span className="mr-px flex-1 bg-[#cbcbcb]" />
            <span className="flex h-[37px] items-end justify-center pb-[6px]">
              <Icon w={8} h={6}>
                <path d="M1 1 4 4.500 7 1" stroke="#505050" strokeWidth="2" />
              </Icon>
            </span>
          </div>
        </div>
        <div className="flex h-[15px] shrink-0 items-center bg-[#f0f0f0]">
          <span className="h-full w-[111px] bg-[#cbcbcb]" />
          <span className="ml-auto pr-[22px]">
            <Icon w={6} h={8}>
              <path d="m1 1 3.500 3L1 7" stroke="#505050" strokeWidth="2" />
            </Icon>
          </span>
        </div>
        <div className="h-[2px] shrink-0" />
      </div>
      <div className="mt-px mr-[9px] mb-[7px] h-[5px] shrink-0 border-y border-r border-[#a8a8a8] bg-[#dcdcdc]" />
    </aside>
  );
}

/* ---------- Graphics window ---------- */

const ARM =
  "M925 312 L950 323 C962 328 972 334 980 340 C1000 350 1018 366 1032 386 C1060 425 1082 490 1081 572 L1081 600 L985 606 C978 602 975 598 975 590 C976 575 984 562 987 547 C990 532 993 515 993 500 C993 472 986 440 950 418 Z";
const ARM_OVERLAP = "M1081 571 C1060 563 1020 583 987 604 L975 615 L1010 640 L1130 640 L1140 600 Z";
const BODY =
  "M1207 634 L1081 571 L1012 541 C1006 541 996 542 987 548 C953 566 930 612 930 645 C930 668 938 686 953 694 L1034 734 L1100 756 L1160 780 L1215 700 Z";

function PartModel() {
  return (
    <svg viewBox="249 201 1544 815" className="h-full w-full" role="img" aria-label="零件模型">
      <defs>
        <linearGradient id="body" gradientUnits="userSpaceOnUse" x1="1138" y1="600" x2="1062" y2="749">
          <stop offset="0" stopColor="#ffb40e" />
          <stop offset=".12" stopColor="#ffc000" />
          <stop offset=".26" stopColor="#ffc200" />
          <stop offset=".4" stopColor="#ffb60e" />
          <stop offset=".52" stopColor="#fc9700" />
          <stop offset=".64" stopColor="#cf7d00" />
          <stop offset=".8" stopColor="#b06a00" />
          <stop offset=".93" stopColor="#945900" />
          <stop offset="1" stopColor="#5e3a00" />
        </linearGradient>
        <linearGradient id="boss" gradientUnits="userSpaceOnUse" x1="936" y1="314" x2="896" y2="404">
          <stop offset="0" stopColor="#ffc000" />
          <stop offset=".25" stopColor="#ffc200" />
          <stop offset=".45" stopColor="#ffa60a" />
          <stop offset=".55" stopColor="#f29100" />
          <stop offset=".75" stopColor="#ba7000" />
          <stop offset=".92" stopColor="#8a5300" />
          <stop offset="1" stopColor="#5e3a00" />
        </linearGradient>
        <linearGradient id="arm" gradientUnits="userSpaceOnUse" x1="1000" y1="340" x2="1030" y2="600">
          <stop offset="0" stopColor="#ff9c00" />
          <stop offset=".35" stopColor="#ee9000" />
          <stop offset=".7" stopColor="#d68100" />
          <stop offset="1" stopColor="#e08600" />
        </linearGradient>
        <linearGradient id="bore" gradientUnits="userSpaceOnUse" x1="1184" y1="668" x2="1148" y2="744">
          <stop offset="0" stopColor="#8a5300" />
          <stop offset=".28" stopColor="#c67800" />
          <stop offset=".48" stopColor="#ff9c08" />
          <stop offset=".62" stopColor="#ffb80c" />
          <stop offset=".75" stopColor="#ffc400" />
        </linearGradient>
        <linearGradient id="smallBore" x1=".7" y1="0" x2=".35" y2="1">
          <stop offset="0" stopColor="#9c5d00" />
          <stop offset=".5" stopColor="#f89a08" />
          <stop offset=".8" stopColor="#ffc200" />
        </linearGradient>
        <linearGradient id="lugBore" x1=".3" y1="0" x2=".6" y2="1">
          <stop offset="0" stopColor="#6c4100" />
          <stop offset=".35" stopColor="#e08800" />
          <stop offset=".6" stopColor="#ffbc08" />
          <stop offset="1" stopColor="#ffc800" />
        </linearGradient>
        <linearGradient id="boltHole" x1="0" y1="0" x2="1" y2=".6">
          <stop offset="0" stopColor="#6c4100" />
          <stop offset=".55" stopColor="#a86500" />
          <stop offset="1" stopColor="#f09408" />
        </linearGradient>
        <linearGradient id="lugSide" gradientUnits="userSpaceOnUse" x1="1135" y1="812" x2="1141" y2="839">
          <stop offset="0" stopColor="#bf7300" />
          <stop offset=".3" stopColor="#ae6900" />
          <stop offset="1" stopColor="#4e3000" />
        </linearGradient>
        <linearGradient id="earSide" x1="0" y1="0" x2=".4" y2="1">
          <stop offset="0" stopColor="#ffb010" />
          <stop offset=".45" stopColor="#f39200" />
          <stop offset="1" stopColor="#c87800" />
        </linearGradient>
        <clipPath id="armClip">
          <path d={ARM} />
        </clipPath>
        <clipPath id="boreClip">
          <ellipse cx="1161.500" cy="706.500" rx="27.700" ry="42" transform="rotate(27 1161.500 706.500)" />
        </clipPath>
        <filter id="soft" filterUnits="userSpaceOnUse" x="850" y="270" width="350" height="400">
          <feGaussianBlur stdDeviation="8" />
        </filter>
      </defs>

      {/* clamp ear behind the main barrel */}
      <g stroke="#4a3a20" strokeWidth=".9">
        <path d="M1207 580 L1227 598 C1231 603 1232 612 1229 619 L1225 627 L1214 643 L1196 640 L1196 600 Z" fill="url(#earSide)" />
        <path d="M1210 615 L1225 627 L1214 644 L1198 632 Z" fill="#cd7b00" />
        <path
          d="M1095 590 L1116 561 C1123 551 1130 548 1139 548 C1144 548 1148 549 1152 551 L1206 579 C1213 583 1216 592 1215 598 C1214 606 1210 612 1207 616 L1196 634 Z"
          fill="#ffb90e"
        />
        <ellipse cx="1133.300" cy="574.300" rx="10" ry="12" transform="rotate(38 1133.300 574.300)" fill="url(#boltHole)" />
        <ellipse cx="1189.700" cy="603.300" rx="10" ry="12" transform="rotate(38 1189.700 603.300)" fill="url(#boltHole)" />
      </g>

      {/* main barrel */}
      <path d={BODY} fill="url(#body)" />
      <path d="M987 548 C953 566 930 612 930 645 C930 668 938 686 953 694" fill="none" stroke="#3c3326" />

      {/* swept arm */}
      <g clipPath="url(#armClip)">
        <path d={ARM} fill="url(#arm)" />
        <path d="M990 425 C1018 450 1032 490 1028 560" fill="none" stroke="#a86500" strokeWidth="26" filter="url(#soft)" opacity=".5" />
        <path d="M940 406 C985 422 1004 460 1004 500 C1004 525 1002 540 998 556" fill="none" stroke="#6e4400" strokeWidth="17" filter="url(#soft)" opacity=".8" />
        <path d="M962 408 C985 424 1000 448 1003 476" fill="none" stroke="#4c2f00" strokeWidth="18" filter="url(#soft)" opacity=".85" />
        <path d="M970 600 L1035 578" stroke="#ff9c08" strokeWidth="18" filter="url(#soft)" />
        <path d="M966 334 C1010 358 1044 405 1064 455" fill="none" stroke="#ff9c00" strokeWidth="22" filter="url(#soft)" opacity=".8" />
      </g>
      <path d={ARM_OVERLAP} fill="url(#body)" />

      {/* upper boss */}
      <path d="M925 312 C915 307 903 307 892 314 C874 325 866 345 866 362 C866 378 870 390 880 395 L928 420 L975 375 L980 340 Z" fill="url(#boss)" />
      <path d="M925 312 C915 307 903 307 892 314 C874 325 866 345 866 362 C866 378 870 390 880 395" fill="none" stroke="#3c3326" />
      <ellipse cx="950.500" cy="378" rx="31" ry="47.400" transform="rotate(26 950.500 378)" fill="#c87800" stroke="#3c3326" />
      <ellipse cx="950" cy="378" rx="13.800" ry="21" transform="rotate(26 950 378)" fill="url(#smallBore)" stroke="#3c3326" />
      <path d="M955 358.500 C961 364 961 376 955 384 C951 391 944 395 938 393" fill="none" stroke="#3c3326" strokeWidth=".9" />

      {/* lower clamp lug */}
      <g stroke="#3c3326" strokeWidth=".9" strokeLinejoin="round">
        <path d="M1100 754 L1205 741 L1193 802 L1087 825 Z" fill="#bf7300" />
        <path d="M1087 825 L1193 801 C1192 812 1188 821 1176 824 L1066 849 Z" fill="url(#lugSide)" />
        <path d="M1142 780 L1135 814 C1133 824 1130 831 1123 835 L1131 833 C1139 829 1142 820 1144 812 L1149 780 Z" fill="#b87000" />
        <path
          d="M1035 721 L1030.500 797 C1030 816 1034 830 1042 840 C1049 848 1057 849 1064 849 C1076 847 1084 838 1087 825 L1100 754 Z"
          fill="#b86f00"
        />
        <ellipse cx="1058.700" cy="807" rx="12.600" ry="18.800" transform="rotate(-8 1058.700 807)" fill="url(#lugBore)" />
      </g>
      <path d="M1035 721 L1100 754" stroke="#3c3326" />

      {/* barrel front face */}
      <path d="M1101 756 C1106 770 1115 779 1126 783" fill="none" stroke="#3c3326" strokeWidth="2.500" />
      <ellipse cx="1161.500" cy="706.700" rx="55" ry="83.600" transform="rotate(27 1161.500 706.700)" fill="#c87800" stroke="#3c3326" />
      <ellipse cx="1161.500" cy="706.500" rx="27.700" ry="42" transform="rotate(27 1161.500 706.500)" fill="url(#bore)" stroke="#3c3326" />
      <g clipPath="url(#boreClip)" stroke="#3c3326" strokeWidth=".9" fill="none">
        <path d="m1134 701 11 6 5-7" />
        <path d="m1130 729 27 13-3 5-24-13z" fill="#b87000" />
        <path d="m1133 734 20 10" />
      </g>

      {/* snap markers */}
      <g strokeWidth="1.500" fill="none">
        <path d="M1190 594v6M1190 607v6M1180 603h6M1194 603h6M1161 697v6M1161 711v6M1151 707h6M1165 707h7" stroke="#ffa868" />
        <path d="M1205 609v6M1205 621v6M1195 618h6M1209 618h6" stroke="#e2e2e2" />
      </g>

      {/* sketch plane and axes */}
      <path d="M872 589.500 933.500 564 990 593 928.500 618Z" fill="#5b93b5" fillOpacity=".35" stroke="#1590ff" strokeWidth="1.500" />
      <path d="M931 584v14M924 591h14" stroke="#0c9a90" strokeWidth="1.300" />
      <path d="M931 591 978 572" stroke="#d8343a" strokeWidth="3" />
      <path d="m992 566.500-19 1.500 4 8z" fill="#d8343a" />
      <ellipse cx="976" cy="572" rx="2.500" ry="4.500" transform="rotate(-22 976 572)" fill="#8c1c20" />
      <path d="M932 592 974 612" stroke="#259130" strokeWidth="3" />
      <path d="m986 618.500-12-11-4 8z" fill="#38a83c" />
      <ellipse cx="972" cy="611" rx="2.500" ry="4.500" transform="rotate(25 972 611)" fill="#1c6c26" />
      <text x="993" y="569" fontSize="13" fill="#d3202c" className="font-['Liberation_Sans',sans-serif]">X</text>
      <text x="987" y="626" fontSize="13" fill="#259130" className="font-['Liberation_Sans',sans-serif]">Y</text>
    </svg>
  );
}

function ViewTriad() {
  return (
    <svg viewBox="270 893 90 82" width="90" height="82" className="absolute bottom-[41px] left-[21px]" role="img" aria-label="视图三重轴">
      <path d="M298 929 319 924 335 933 333 957 313 962 296 952ZM298 929 316 938 335 933M316 938 313 962" fill="none" stroke="#a9a9a9" strokeWidth="1.200" />
      <path d="M315 947 318 922" stroke="#9aa4d8" strokeWidth="3" />
      <path d="M313 949 295 953" stroke="#dc9c9e" strokeWidth="3" />
      <path d="M316 949 333 958" stroke="#9cc4a0" strokeWidth="3" />
      <circle cx="314.500" cy="949" r="3" fill="#dadada" />
      <path d="m319.500 908-4 12 2 4h2.500l2.500-4z" fill="#0a34d0" />
      <path d="m283 956 9-6 4 3-3 4z" fill="#d8343a" />
      <path d="m343 963-7-7-4 1 1 4z" fill="#259130" />
      <g fontSize="12" className="font-['Liberation_Sans',sans-serif]">
        <text x="316" y="907" fill="#3a56ff">Z</text>
        <text x="275" y="961" fill="#d8343a">X</text>
        <text x="344" y="970" fill="#259130">Y</text>
      </g>
    </svg>
  );
}

function GraphicsWindow() {
  return (
    <main className="flex min-w-0 flex-1 flex-col">
      <div className="flex h-[23px] shrink-0 border-b-2 border-[#55a0b9] bg-white">
        <div className="flex h-[23px] w-[140px] items-center bg-[#55a0b9] pb-[3px] pl-[7px]">
          <Icon w={15} h={15}>
            <path d="M1 1h5v5H1zM1 9h3v5H1zM6.500 9v5h7.500V9" stroke="#111" strokeWidth="1.300" />
            <path d="m7 9 6-8 2 1-6 7.500z" fill="#f4c830" stroke="#8a5a10" strokeWidth=".6" />
            <path d="m12 2 1.500-2L15 1l-1 2z" fill="#c04030" />
          </Icon>
          <span className="ml-1 text-[12px] leading-4 text-[#eaf5f9]">_model80.prt</span>
          <span className="ml-auto flex items-center gap-[6px] pr-[7px]">
            <Icon w={11} h={11}>
              <path d="M7 1H1v9h6.500M7 1v2.500h2" stroke="#fff" strokeWidth="1.600" />
              <path d="m5 8 4-4 1.500 1.500-4 3.500z" fill="#fff" />
            </Icon>
            <button type="button" aria-label="关闭选项卡">
              <Icon w={8} h={8}>
                <path d="m1 1 6 6M7 1 1 7" stroke="#b9b9b9" strokeWidth="2.200" />
              </Icon>
            </button>
          </span>
        </div>
      </div>
      <div className="relative min-h-0 flex-1 overflow-hidden bg-[#d3d4d6]">
        <PartModel />
        <ViewTriad />
        <p className="absolute right-[5px] bottom-0 font-['Liberation_Mono','Noto_Sans_CJK_SC',monospace] text-[13px] leading-4 whitespace-nowrap text-[#858585] [text-shadow:-1px_-1px_0_#efefef]">
          UG<span className="text-[16px]">爱好者论坛</span> WWW.UGSNX.COM
        </p>
      </div>
    </main>
  );
}

export default function App() {
  return (
    <div className="flex h-screen flex-col overflow-hidden bg-white font-['Noto_Sans','Noto_Sans_CJK_SC',sans-serif] text-[#111]">
      <TitleBar />
      <TabBar />
      <Ribbon />
      <SelectionBar />
      <div className="flex min-h-0 flex-1">
        <Navigator />
        <GraphicsWindow />
      </div>
      <footer className="h-[3px] shrink-0 border-t border-[#a0a0a0] bg-[#f4f4f4]" />
    </div>
  );
}
